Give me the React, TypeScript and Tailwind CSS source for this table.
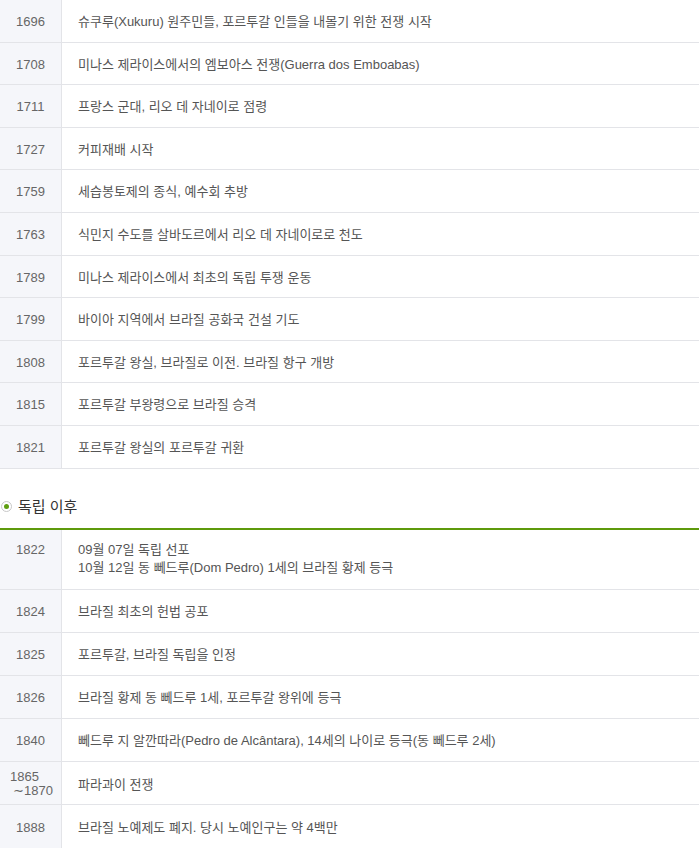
import React from 'react';

const before: [string, string][] = [
    ['1696', '슈쿠루(Xukuru) 원주민들, 포르투갈 인들을 내몰기 위한 전쟁 시작'],
    ['1708', '미나스 제라이스에서의 엠보아스 전쟁(Guerra dos Emboabas)'],
    ['1711', '프랑스 군대, 리오 데 자네이로 점령'],
    ['1727', '커피재배 시작'],
    ['1759', '세습봉토제의 종식, 예수회 추방'],
    ['1763', '식민지 수도를 살바도르에서 리오 데 자네이로로 천도'],
    ['1789', '미나스 제라이스에서 최초의 독립 투쟁 운동'],
    ['1799', '바이아 지역에서 브라질 공화국 건설 기도'],
    ['1808', '포르투갈 왕실, 브라질로 이전. 브라질 항구 개방'],
    ['1815', '포르투갈 부왕령으로 브라질 승격'],
    ['1821', '포르투갈 왕실의 포르투갈 귀환'],
];

const after: [string, string][] = [
    ['1824', '브라질 최초의 헌법 공포'],
    ['1825', '포르투갈, 브라질 독립을 인정'],
    ['1826', '브라질 황제 동 뻬드루 1세, 포르투갈 왕위에 등극'],
    ['1840', '뻬드루 지 알깐따라(Pedro de Alcântara), 14세의 나이로 등극(동 뻬드루 2세)'],
];

const font = { fontFamily: '"Liberation Sans", "Noto Sans CJK KR", sans-serif' };

const Row = ({ year, text, tall }: { year: React.ReactNode; text: React.ReactNode; tall?: boolean }) => (
    <div className={tall ? 'flex h-[43.2px] border-b border-[#e3e4e8]' : 'flex h-[42.6px] border-b border-[#e3e4e8]'}>
        <div className="w-[62px] shrink-0 bg-[#f5f6fa] border-r border-[#e3e4e8] flex items-center justify-center pt-[2px] text-[#666] text-[13px]">
            {year}
        </div>
        <div className="flex-1 flex items-center pl-[16px] pt-[2px] text-[#555] text-[13px]">{text}</div>
    </div>
);

export default function App() {
    return (
        <div className="w-[699px] bg-white" style={font}>
            {/* before independence */}
            <div>
                {before.map(([y, t]) => (
                    <Row key={y} year={y} text={t} />
                ))}
            </div>

            {/* heading */}
            <div className="flex items-center gap-[6px] pt-[28px] pb-[11px] pl-[1px]">
                <span className="w-[11px] h-[11px] rounded-full border border-[#c8c8c8] flex items-center justify-center">
                    <span className="w-[5px] h-[5px] rounded-full bg-[#5e9e10]" />
                </span>
                <span className="text-[15px] text-[#333] leading-[20px]">독립 이후</span>
            </div>

            {/* after independence */}
            <div className="border-t-2 border-[#5e9a0c]">
                <div className="flex h-[60px] border-b border-[#e3e4e8]">
                    <div className="w-[62px] shrink-0 bg-[#f5f6fa] border-r border-[#e3e4e8] flex justify-center pt-[13px] text-[#666] text-[13px] leading-[14px]">
                        1822
                    </div>
                    <div className="flex-1 pl-[16px] pt-[11px] text-[#555] text-[13px] leading-[18px]">
                        <div>09월 07일 독립 선포</div>
                        <div>10월 12일 동 뻬드루(Dom Pedro) 1세의 브라질 황제 등극</div>
                    </div>
                </div>
                {after.map(([y, t]) => (
                    <Row key={y} year={y} text={t} tall />
                ))}
                <Row
                    tall
                    year={
                        <div className="leading-[14px] w-full pl-[10px]">
                            <div>1865</div>
                            <div className="pl-[3px]">∼1870</div>
                        </div>
                    }
                    text="파라과이 전쟁"
                />
                <Row tall year="1888" text="브라질 노예제도 폐지. 당시 노예인구는 약 4백만" />
            </div>
        </div>
    );
}
